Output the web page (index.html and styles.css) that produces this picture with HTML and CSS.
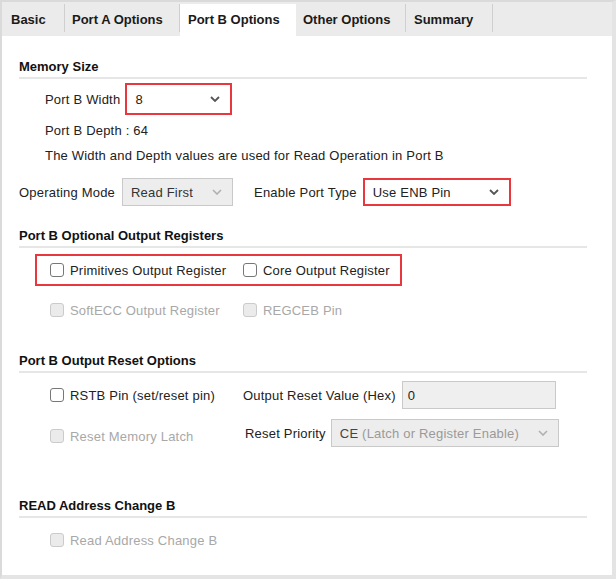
FILE: index.html
```html
<!DOCTYPE html>
<html>
<head>
<meta charset="utf-8">
<link rel="stylesheet" href="styles.css">
</head>
<body>
<div class="frame">
  <div class="tabbar">
    <div class="tab tab-basic">Basic</div>
    <div class="tab tab-a">Port A Options</div>
    <div class="tab tab-b active">Port B Options</div>
    <div class="tab tab-other">Other Options</div>
    <div class="tab tab-sum">Summary</div>
  </div>
  <div class="panel">
    <div class="hdr h1">Memory Size</div>
    <div class="row row-width">
      <span class="lbl">Port B Width</span>
      <div class="combo hl combo-width"><span class="val">8</span><svg class="chev" width="10" height="6" viewBox="0 0 10 6"><polyline points="1,1 5,5 9,1" fill="none" stroke="#555" stroke-width="1.8"/></svg></div>
    </div>
    <div class="text t-depth">Port B Depth : 64</div>
    <div class="text t-desc">The Width and Depth values are used for Read Operation in Port B</div>
    <div class="row row-mode">
      <span class="lbl">Operating Mode</span>
      <div class="combo dis combo-mode"><span class="val">Read First</span><svg class="chev" width="10" height="6" viewBox="0 0 10 6"><polyline points="1,1 5,5 9,1" fill="none" stroke="#b0b0b0" stroke-width="1.6"/></svg></div>
      <span class="lbl lbl-ept">Enable Port Type</span>
      <div class="combo hl combo-ept"><span class="val">Use ENB Pin</span><svg class="chev" width="10" height="6" viewBox="0 0 10 6"><polyline points="1,1 5,5 9,1" fill="none" stroke="#555" stroke-width="1.8"/></svg></div>
    </div>

    <div class="hdr h2">Port B Optional Output Registers</div>
    <div class="redbox">
      <label class="chk col1"><span class="box"></span>Primitives Output Register</label>
      <label class="chk"><span class="box"></span>Core Output Register</label>
    </div>
    <div class="row opts row-soft">
      <label class="chk col1 disabled"><span class="box"></span>SoftECC Output Register</label>
      <label class="chk disabled"><span class="box"></span>REGCEB Pin</label>
    </div>

    <div class="hdr h3">Port B Output Reset Options</div>
    <div class="row opts row-rstb">
      <label class="chk col1"><span class="box"></span>RSTB Pin (set/reset pin)</label>
      <span class="lbl">Output Reset Value (Hex)</span>
      <div class="input">0</div>
    </div>
    <div class="row opts row-prio">
      <label class="chk col1 disabled low"><span class="box"></span>Reset Memory Latch</label>
      <span class="lbl lbl-prio">Reset Priority</span>
      <div class="combo dis combo-prio"><span class="val">CE <span class="dim">(Latch or Register Enable)</span></span><svg class="chev" width="10" height="6" viewBox="0 0 10 6"><polyline points="1,1 5,5 9,1" fill="none" stroke="#b0b0b0" stroke-width="1.6"/></svg></div>
    </div>

    <div class="hdr h4">READ Address Change B</div>
    <div class="row opts row-read">
      <label class="chk disabled"><span class="box"></span>Read Address Change B</label>
    </div>
  </div>
</div>
</body>
</html>
```

FILE: styles.css
```css
* { box-sizing: border-box; }
html, body { margin: 0; padding: 0; background: #ffffff; }
body {
  font-family: "Liberation Sans", Arial, sans-serif;
  font-size: 13px;
  color: #222;
  letter-spacing: 0.2px;
}
.frame {
  width: 616px;
  height: 579px;
  border-top: 2px solid #dadada;
  border-left: 2px solid #dadada;
  border-right: 4px solid #e4e4e4;
  border-bottom: 4px solid #e4e4e4;
  display: flex;
  flex-direction: column;
  background: #fff;
}
.tabbar {
  height: 34px;
  background: #ebebeb;
  display: flex;
  align-items: flex-end;
  flex-shrink: 0;
}
.tab {
  height: 32px;
  display: flex;
  align-items: center;
  padding-left: 9px;
  padding-bottom: 2px;
  font-weight: bold;
  font-size: 13px;
  letter-spacing: 0;
  color: #1a1a1a;
  position: relative;
}
.tab::after {
  content: "";
  position: absolute;
  right: 0;
  top: 0;
  bottom: 4px;
  width: 1px;
  background: #cfcfcf;
}
.tab.active::after { display: none; }
.tab-basic { width: 63px; }
.tab-a { width: 115px; padding-left: 7px; }
.tab-b { width: 116px; padding-left: 8px; }
.tab-other { width: 110px; padding-left: 7px; }
.tab-sum { width: 87px; padding-left: 8px; }
.tab.active { background: #fff; }

.panel {
  flex: 1;
  padding-left: 17px;
  display: flex;
  flex-direction: column;
  align-items: flex-start;
}
.hdr {
  width: 568px;
  font-weight: bold;
  font-size: 13px;
  letter-spacing: 0;
  line-height: 14px;
  color: #111;
  padding-bottom: 3px;
  border-bottom: 2px solid #e6e6e6;
}
.h1 { margin-top: 24px; }
.h2 { margin-top: 23px; }
.h3 { margin-top: 34px; }
.h4 { margin-top: 52px; }

.row {
  display: flex;
  align-items: center;
}
.lbl { white-space: nowrap; }
.row-width { margin-top: 4px; padding-left: 26px; height: 32px; }
.row-width .lbl { margin-right: 5px; }
.text { line-height: 16px; padding-left: 26px; }
.t-depth { margin-top: 8px; }
.t-desc { margin-top: 9px; }
.row-mode { margin-top: 14px; height: 28px; }
.row-mode .lbl { margin-right: 7px; }
.row-mode .lbl-ept { margin-left: 21px; margin-right: 6px; }

.combo {
  display: flex;
  align-items: center;
  justify-content: space-between;
  padding: 0 10px 0 8px;
}
.combo.hl { border: 2px solid #e8383d; background: #fff; }
.combo.dis { border: 1px solid #c9c9c9; background: #ededed; }
.combo-width { width: 107px; height: 32px; }
.combo-mode { width: 111px; height: 28px; }
.combo-ept { width: 148px; height: 28px; }
.combo-prio { width: 228px; height: 28px; color: #444; }
.combo-prio .dim { color: #9a9a9a; }
.combo .val { white-space: nowrap; }
.combo-mode .val { color: #333; }

.chk {
  display: flex;
  align-items: center;
  white-space: nowrap;
}
.chk .box {
  width: 14px;
  height: 14px;
  border: 1px solid #777;
  border-radius: 3px;
  background: #fff;
  margin-right: 6px;
  flex-shrink: 0;
}
.chk.disabled { color: #a8a8a8; }
.chk.disabled .box { border-color: #cbcbcb; background: #ebebeb; }
.col1 { width: 193px; }

.redbox {
  margin-top: 6px;
  margin-left: 16px;
  width: 367px;
  height: 32px;
  border: 2px solid #e8383d;
  padding-left: 13px;
  display: flex;
  align-items: center;
}
.opts { padding-left: 31px; }
.row-soft { margin-top: 14px; height: 20px; }
.row-rstb { margin-top: 8px; height: 28px; }
.row-rstb .lbl { margin-right: 6px; }
.input {
  width: 154px;
  height: 28px;
  background: #efefef;
  border: 1px solid #c9c9c9;
  display: flex;
  align-items: center;
  padding-left: 5px;
}
.row-prio { margin-top: 10px; height: 28px; }
.row-prio .lbl-prio { margin-left: 2px; margin-right: 5px; }
.low { position: relative; top: 3px; }
.row-read { margin-top: 12px; height: 20px; }
```
